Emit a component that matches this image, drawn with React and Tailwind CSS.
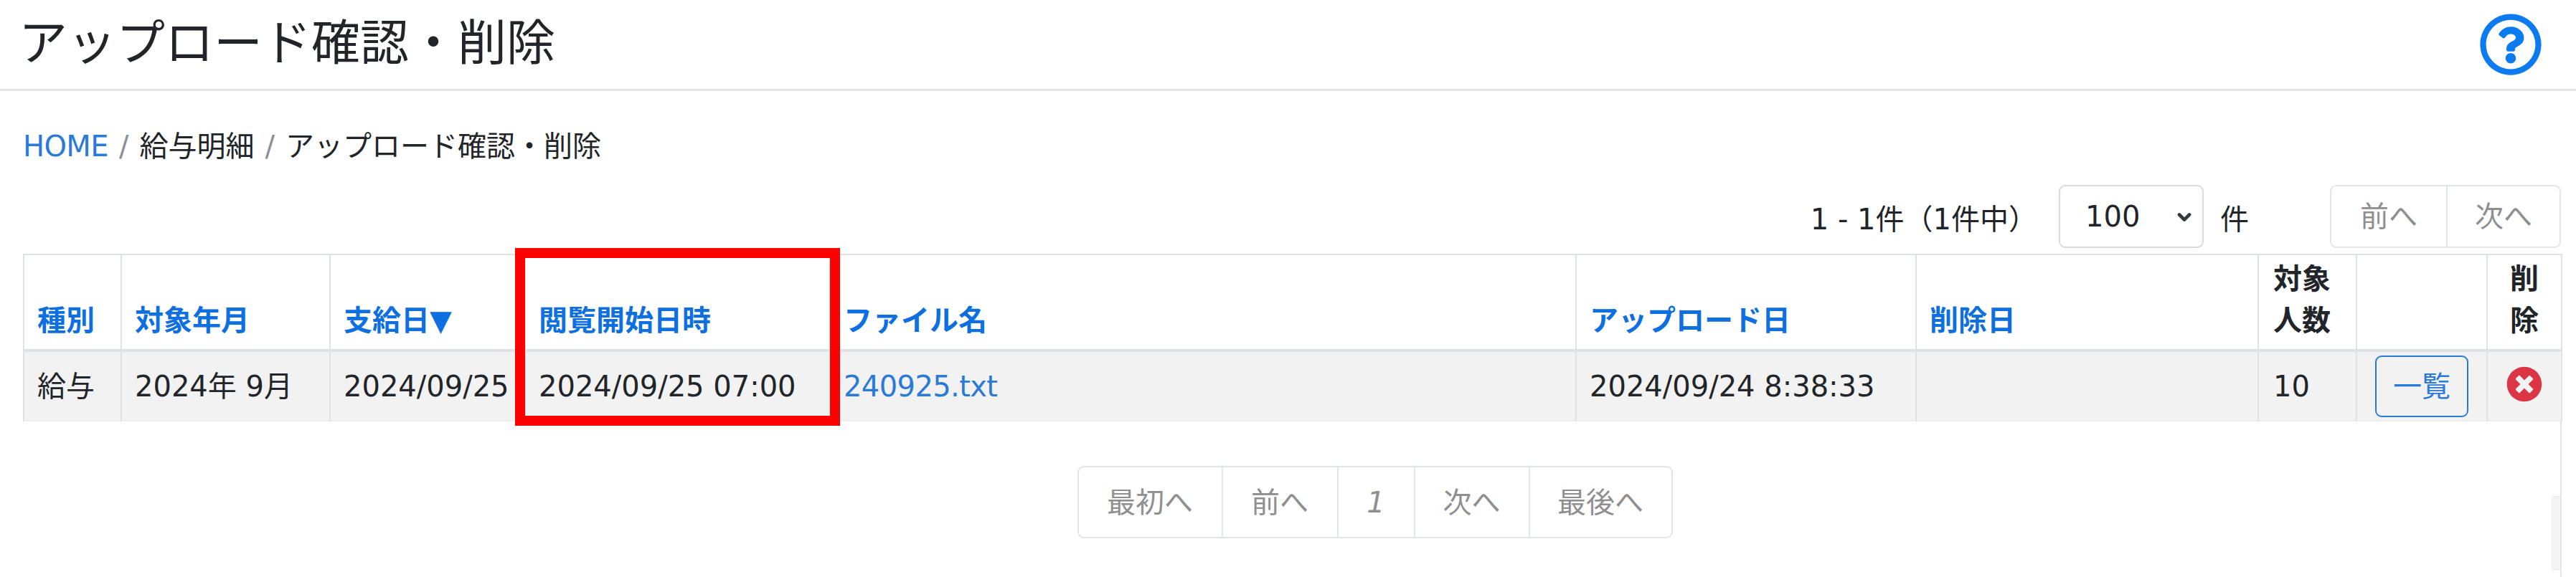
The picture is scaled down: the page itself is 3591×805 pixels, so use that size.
import { ChevronDown } from "lucide-react";
import { FaRegQuestionCircle, FaTimesCircle } from "react-icons/fa";

const columns = [
  { label: "種別", width: "w-[136px]" },
  { label: "対象年月", width: "w-[291px]" },
  { label: "支給日▼", width: "w-[272px]" },
  { label: "閲覧開始日時", width: "w-[425px]" },
  { label: "ファイル名", width: "w-[1040px]" },
  { label: "アップロード日", width: "w-[474px]" },
  { label: "削除日", width: "w-[477px]" },
];

function Pager({ items, className }) {
  return (
    <div className={`flex border-2 border-[#e3e6e9] rounded-[9px] text-[#8f8f8f] ${className}`}>
      {items.map((item, i) => (
        <span
          key={item.label}
          className={`flex items-center justify-center ${item.width} ${i > 0 ? "border-l-2 border-[#e3e6e9]" : ""} ${item.italic ? "italic" : ""}`}
        >
          {item.label}
        </span>
      ))}
    </div>
  );
}

export default function App() {
  return (
    <div className="relative h-[805px] bg-white text-[40px] leading-[58px] text-[#212529] font-['DejaVu_Sans','Noto_Sans_CJK_JP',sans-serif] overflow-hidden">
      {/* Page header */}
      <header className="flex items-center justify-between h-[127px] border-b-[3px] border-[#e4e4e4] pl-[26px] pr-[47px]">
        <h1 className="text-[68px] leading-none font-normal -mt-[3px]">アップロード確認・削除</h1>
        <FaRegQuestionCircle className="w-[88px] h-[88px] text-[#0d7bf0]" />
      </header>

      <div className="pl-[32px] pr-[21px]">
        {/* Breadcrumb */}
        <nav className="flex items-center gap-[15px] h-[58px] mt-[48px]">
          <a className="text-[#2a7ad8] tracking-[-0.6px]">HOME</a>
          <span className="text-[#8b8f94]">/</span>
          <span>給与明細</span>
          <span className="text-[#8b8f94]">/</span>
          <span>アップロード確認・削除</span>
        </nav>

        {/* Toolbar */}
        <div className="flex items-center justify-end h-[88px] mt-[25px]">
          <span className="mr-[30px] mt-[8px]">1 - 1件（1件中）</span>
          <div className="relative w-[202px] h-[88px] mr-[23px]">
            <select
              defaultValue="100"
              className="appearance-none w-full h-full pl-[35px] border-2 border-[#d9dcdf] rounded-[9px] bg-white outline-none"
            >
              <option>100</option>
            </select>
            <ChevronDown className="absolute right-[13px] top-[31px] w-[28px] h-[28px] text-[#343a40] stroke-[4]" />
          </div>
          <span className="mr-[113px] mt-[8px]">件</span>
          <Pager
            className="h-[88px]"
            items={[
              { label: "前へ", width: "w-[160px]" },
              { label: "次へ", width: "w-[158px]" },
            ]}
          />
        </div>

        {/* Table */}
        <table className="w-[3538px] table-fixed border-collapse mt-[8px]">
          <thead>
            <tr className="h-[134px] border-t-2 border-b-[4px] border-[#e0e3e6]">
              {columns.map((col) => (
                <th
                  key={col.label}
                  className={`${col.width} align-bottom text-left font-bold text-[#0d6fe0] px-[18px] pb-[11px] border-x-2 border-[#e0e3e6] whitespace-nowrap`}
                >
                  {col.label}
                </th>
              ))}
              <th className="w-[137px] align-bottom text-left font-bold px-[20px] pb-[11px] border-x-2 border-[#e0e3e6]">
                対象<br />人数
              </th>
              <th className="w-[182px] border-x-2 border-[#e0e3e6]"></th>
              <th className="w-[104px] align-bottom text-center font-bold pb-[11px] border-x-2 border-[#e0e3e6]">
                削<br />除
              </th>
            </tr>
          </thead>
          <tbody>
            <tr className="h-[98px] bg-[#f2f2f2] border-b-2 border-[#eeeeee]">
              <td className="px-[18px] border-x-2 border-[#e0e3e6] whitespace-nowrap">給与</td>
              <td className="px-[18px] border-x-2 border-[#e0e3e6] whitespace-nowrap">2024年 9月</td>
              <td className="px-[18px] border-x-2 border-[#e0e3e6] whitespace-nowrap">2024/09/25</td>
              <td className="px-[18px] border-x-2 border-[#e0e3e6] whitespace-nowrap">2024/09/25 07:00</td>
              <td className="px-[18px] border-x-2 border-[#e0e3e6]">
                <a className="text-[#2a7ad8] tracking-[-0.6px]">240925.txt</a>
              </td>
              <td className="px-[18px] border-x-2 border-[#e0e3e6] whitespace-nowrap">2024/09/24 8:38:33</td>
              <td className="px-[18px] border-x-2 border-[#e0e3e6]"></td>
              <td className="px-[20px] border-x-2 border-[#e0e3e6]">10</td>
              <td className="border-x-2 border-[#e0e3e6]">
                <div className="flex justify-center">
                  <button className="w-[130px] h-[86px] border-2 border-[#2a7ad8] rounded-[9px] text-[#2a7ad8]">一覧</button>
                </div>
              </td>
              <td className="border-x-2 border-[#e0e3e6]">
                <div className="flex justify-center">
                  <FaTimesCircle className="w-[50px] h-[50px] text-[#dc3545] -mt-[6px]" />
                </div>
              </td>
            </tr>
          </tbody>
        </table>

        {/* Bottom pager */}
        <div className="flex justify-center mt-[62px]">
          <Pager
            className="h-[101px] ml-[231px]"
            items={[
              { label: "最初へ", width: "w-[199px]" },
              { label: "前へ", width: "w-[161px]" },
              { label: "1", width: "w-[107px]", italic: true },
              { label: "次へ", width: "w-[160px]" },
              { label: "最後へ", width: "w-[199px]" },
            ]}
          />
        </div>
      </div>

      {/* Red annotation box */}
      <div className="absolute left-[718px] top-[346px] w-[453px] h-[248px] border-[14px] border-[#ff0000]" />

      {/* Leftover scroll track at the right edge of the table */}
      <div className="absolute left-[3569px] top-[587px] w-[2px] h-[218px] bg-[#e4e6e8]" />
      <div className="absolute left-[3557px] top-[692px] w-[12px] h-[103px] bg-[#f4f4f4] border-y border-[#e8e8e8]" />
    </div>
  );
}
